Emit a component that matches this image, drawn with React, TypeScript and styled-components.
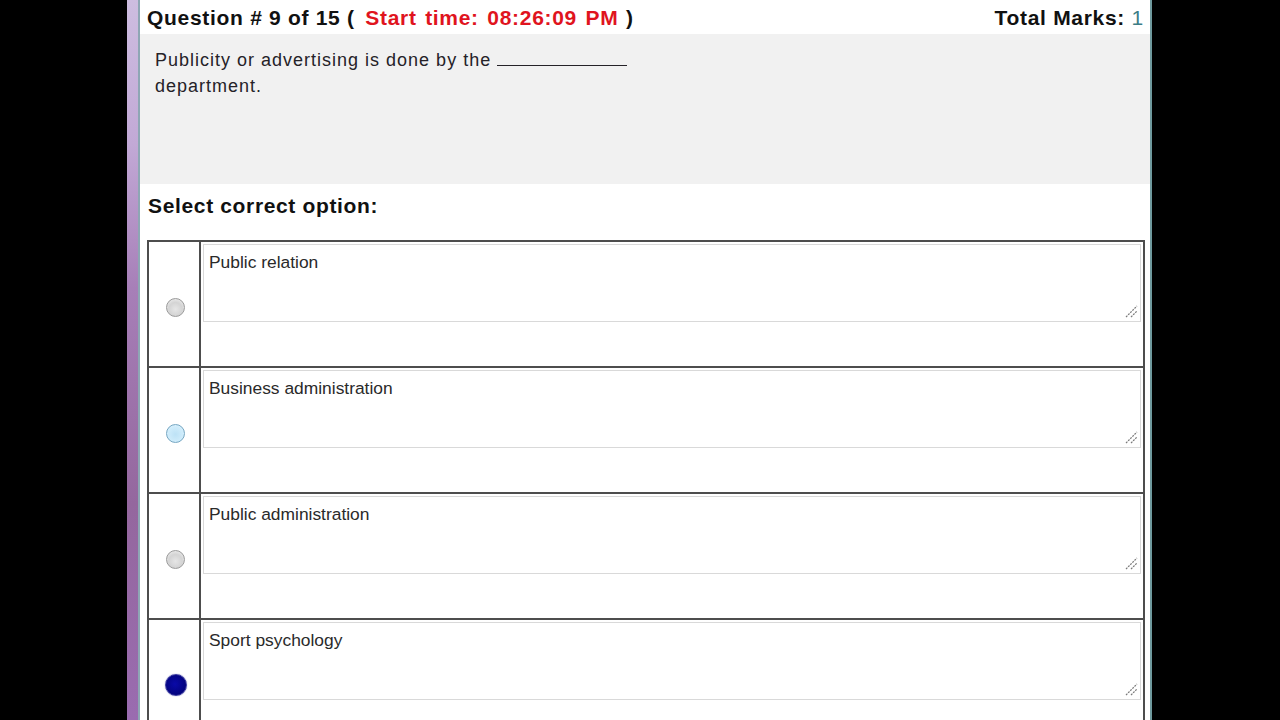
import React from "react";
import styled, { createGlobalStyle } from "styled-components";

const Global = createGlobalStyle`
  html, body { margin: 0; padding: 0; background: #000; overflow: hidden; }
  body { font-family: "Liberation Sans", Arial, sans-serif; }
`;

const Frame = styled.div`
  display: flex;
  width: 1280px;
  height: 720px;
  overflow: hidden;
  background: #000;
`;

const SideBlack = styled.div<{ $w: number }>`
  width: ${(p) => p.$w}px;
  flex: none;
  background: #000;
`;

const PurpleStrip = styled.div`
  width: 11px;
  flex: none;
  background: linear-gradient(180deg, #cdbde0 0%, #c2a9d6 20%, #a77fb8 40%, #94679e 70%, #9a6cb0 100%);
`;

const EdgeLine = styled.div<{ $c: string }>`
  width: 2px;
  flex: none;
  background: ${(p) => p.$c};
`;

const Page = styled.div`
  width: 1010px;
  flex: none;
  background: #fff;
  display: flex;
  flex-direction: column;
  & > * { flex: none; }
`;

const Header = styled.div`
  height: 34px;
  display: flex;
  align-items: center;
  justify-content: space-between;
  padding: 1px 6px 0 7px;
  box-sizing: border-box;
  font-weight: bold;
  font-size: 21px;
  letter-spacing: 0.7px;
  color: #111;
  white-space: pre;
`;

const Red = styled.span`
  color: #e0141e;
  word-spacing: 2px;
  margin: 0 1px 0 4px;
`;

const Teal = styled.span`
  color: #3d7d86;
  font-weight: normal;
`;

const QuestionBox = styled.div`
  height: 150px;
  background: #f1f1f1;
  padding: 13px 15px 0;
  box-sizing: border-box;
  font-size: 18px;
  letter-spacing: 1px;
  line-height: 26px;
  color: #252228;
`;

const Blank = styled.span`
  display: inline-block;
  width: 130px;
  height: 18px;
  margin-left: 6px;
  border-bottom: 1.5px solid #252228;
  vertical-align: baseline;
`;

const SectionTitle = styled.div`
  height: 56px;
  box-sizing: border-box;
  padding: 10px 0 0 8px;
  line-height: 24px;
  font-weight: bold;
  font-size: 21px;
  letter-spacing: 0.65px;
  color: #111;
`;

const OptionsTable = styled.div`
  margin: 0 5px 0 7px;
  border: 2px solid #4d4d4d;
  border-bottom: none;
  display: flex;
  flex-direction: column;
`;

const Row = styled.div<{ $first?: boolean }>`
  display: grid;
  grid-template-columns: 52px 1fr;
  height: 124px;
  flex: none;
  border-top: ${(p) => (p.$first ? "none" : "2px solid #4d4d4d")};
`;

const RadioCell = styled.div`
  display: flex;
  align-items: center;
  justify-content: center;
  padding-top: 6px;
  border-right: 2px solid #4d4d4d;
`;

const Radio = styled.span<{ $state: "off" | "hover" | "on" }>`
  width: 19px;
  height: 19px;
  border-radius: 50%;
  box-sizing: border-box;
  margin-left: 3px;
  ${(p) =>
    p.$state === "off"
      ? `border: 1px solid #9a9a9a; background: radial-gradient(circle at 50% 60%, #e6e6e6 0%, #d4d4d4 50%, #f6f6f6 100%);`
      : p.$state === "hover"
      ? `border: 1px solid #74a6c2; background: radial-gradient(circle at 50% 55%, #bde2f6 0%, #cfecfb 60%, #eaf8ff 100%);`
      : `width: 22px; height: 22px; border: 1px solid #3a3aa0; background: radial-gradient(circle at 45% 45%, #0a0aa8 0%, #03037e 70%, #2a2a90 100%); box-shadow: 0 0 1px #5a5ab0;`}
`;

const TextCell = styled.div`
  padding: 2px;
`;

const AreaWrap = styled.div`
  position: relative;
`;

const AnswerArea = styled.textarea`
  display: block;
  width: 100%;
  height: 78px;
  box-sizing: border-box;
  border: 1px solid #d9d9d9;
  padding: 7px 5px;
  margin: 0;
  font-family: "Liberation Sans", Arial, sans-serif;
  font-size: 17.4px;
  line-height: 20px;
  color: #2a2a2a;
  background: #fff;
  resize: none;
  outline: none;
  overflow: hidden;
`;

const Grip = styled.svg`
  position: absolute;
  right: 3px;
  bottom: 4px;
  width: 13px;
  height: 13px;
`;

const options: { text: string; state: "off" | "hover" | "on" }[] = [
  { text: "Public relation", state: "off" },
  { text: "Business administration", state: "hover" },
  { text: "Public administration", state: "off" },
  { text: "Sport psychology", state: "on" },
];

export default function App() {
  return (
    <>
      <Global />
      <Frame>
        <SideBlack $w={127} />
        <PurpleStrip />
        <EdgeLine $c="#8ea6b4" />
        <Page>
          <Header>
            <span>
              {"Question # 9 of 15 ( "}
              <Red>Start time: 08:26:09 PM</Red>
              {" )"}
            </span>
            <span>
              {"Total Marks: "}
              <Teal>1</Teal>
            </span>
          </Header>
          <QuestionBox>
            Publicity or advertising is done by the
            <Blank />
            <br />
            department.
          </QuestionBox>
          <SectionTitle>Select correct option:</SectionTitle>
          <OptionsTable>
            {options.map((o, i) => (
              <Row key={o.text} $first={i === 0}>
                <RadioCell>
                  <Radio $state={o.state} />
                </RadioCell>
                <TextCell>
                  <AreaWrap>
                    <AnswerArea readOnly value={o.text} />
                    <Grip viewBox="0 0 13 13">
                      <line x1="1" y1="12" x2="12" y2="1" stroke="#7a7a7a" strokeWidth="1.2" strokeDasharray="2 1" />
                      <line x1="6" y1="12" x2="12" y2="6" stroke="#7a7a7a" strokeWidth="1.2" strokeDasharray="2 1" />
                    </Grip>
                  </AreaWrap>
                </TextCell>
              </Row>
            ))}
          </OptionsTable>
        </Page>
        <EdgeLine $c="#6f9a9e" />
        <SideBlack $w={128} />
      </Frame>
    </>
  );
}
